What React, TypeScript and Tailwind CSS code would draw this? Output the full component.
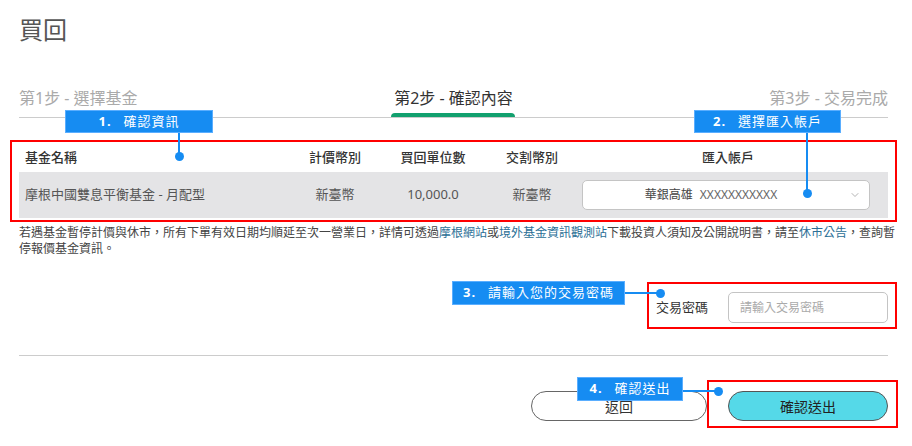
import { ChevronDown } from "lucide-react";

const FONT = {
  fontFamily: '"Noto Sans", "Noto Sans CJK TC", "Liberation Sans", sans-serif',
};

function Step({ label, active, align }: { label: string; active?: boolean; align: string }) {
  return (
    <div className={`flex flex-col ${align}`}>
      <span className={`text-[16px] leading-[20px] ${active ? "text-[#333]" : "text-[#aaa]"}`}>
        {label}
      </span>
      {active && <span className="mt-[5px] h-[4px] w-[124px] rounded-t-[4px] bg-[#12a06e]" />}
    </div>
  );
}

// blue callout tag with a leader line + dot
function Tag({ num, text, className }: { num: string; text: string; className: string }) {
  return (
    <div
      className={`absolute flex h-[23px] items-center justify-center border border-[#5aaeff] bg-[#168cf2] text-[13px] tracking-[1px] text-white ${className}`}
    >
      <span className="mr-[12px] font-bold">{num}.</span>
      <span>{text}</span>
    </div>
  );
}

function Dot({ className }: { className: string }) {
  return <div className={`absolute h-[9px] w-[9px] rounded-full bg-[#168cf2] ${className}`} />;
}

function Line({ className }: { className: string }) {
  return <div className={`absolute bg-[#168cf2] ${className}`} />;
}

export default function App() {
  return (
    <div className="relative h-[446px] w-[912px] overflow-hidden bg-white" style={FONT}>
      <div className="pl-[19px] pr-[24px] pt-[16px]">
        <h1 className="text-[24px] leading-[28px] text-[#555]">買回</h1>

        {/* steps */}
        <div className="mt-[44px] grid grid-cols-3 items-start border-b border-[#ccc]">
          <Step label="第1步 - 選擇基金" align="items-start" />
          <Step label="第2步 - 確認內容" active align="items-center" />
          <Step label="第3步 - 交易完成" align="items-end" />
        </div>

        {/* fund table */}
        <div className="mt-[25px] text-[13px]">
          <div className="grid h-[29px] grid-cols-[281px_70px_126px_72px_1fr] items-center font-medium text-[#333]">
            <span className="pl-[6px]">基金名稱</span>
            <span className="text-center">計價幣別</span>
            <span className="text-center">買回單位數</span>
            <span className="text-center">交割幣別</span>
            <span className="text-center">匯入帳戶</span>
          </div>
          <div className="grid h-[46px] grid-cols-[281px_70px_126px_72px_1fr] items-center bg-[#e4e4e6] text-[#555]">
            <span className="pl-[6px]">摩根中國雙息平衡基金 - 月配型</span>
            <span className="text-center">新臺幣</span>
            <span className="text-center">10,000.0</span>
            <span className="text-center">新臺幣</span>
            <div className="pl-[14px] pr-[18px]">
              <div className="relative flex h-[30px] items-center justify-center rounded-[5px] border border-[#c4c4c4] bg-white pr-[30px] text-[12px] text-[#444]">
                <span>華銀高雄</span>
                <span className="ml-[7px] text-[#666]">XXXXXXXXXXX</span>
                <ChevronDown size={12} strokeWidth={1.5} className="absolute right-[8px] text-[#999]" />
              </div>
            </div>
          </div>
        </div>

        <p className="mt-[7px] w-[880px] text-[12px] leading-[16px] text-[#444]">
          若遇基金暫停計價與休市，所有下單有效日期均順延至次一營業日，詳情可透過<span className="text-[#2b6f96]">摩根網站</span>或<span className="text-[#2b6f96]">境外基金資訊觀測站</span>下載投資人須知及公開說明書，請至<span className="text-[#2b6f96]">休市公告</span>，查詢暫停報價基金資訊。
        </p>

        {/* password */}
        <div className="mt-[35px] flex items-center justify-end gap-[20px]">
          <span className="text-[13px] text-[#333]">交易密碼</span>
          <input
            type="password"
            placeholder="請輸入交易密碼"
            className="h-[31px] w-[160px] rounded-[5px] border border-[#c4c4c4] px-[11px] text-[12px] outline-none placeholder:text-[#aaa]"
          />
        </div>

        <div className="mt-[32px] border-t border-[#ccc]" />

        {/* actions */}
        <div className="mt-[35px] flex justify-end gap-[21px]">
          <button className="h-[30px] w-[176px] rounded-full border border-[#666] bg-white text-[14px] text-[#333]">
            返回
          </button>
          <button className="h-[30px] w-[160px] rounded-full border border-[#555] bg-[#55d9e8] text-[14px] text-[#222]">
            確認送出
          </button>
        </div>
      </div>

      {/* annotation overlay */}
      <div className="pointer-events-none absolute left-[10px] top-[140px] h-[82px] w-[887px] border-2 border-[#ff0000]" />
      <div className="pointer-events-none absolute left-[647px] top-[282px] h-[47px] w-[250px] border-2 border-[#ff0000]" />
      <div className="pointer-events-none absolute left-[707px] top-[380px] h-[48px] w-[191px] border-2 border-[#ff0000]" />

      <Line className="left-[178px] top-[133px] h-[22px] w-[2px]" />
      <Dot className="left-[175px] top-[152px]" />
      <Tag num="1" text="確認資訊" className="left-[65px] top-[110px] w-[148px]" />

      <Line className="left-[806px] top-[133px] h-[58px] w-[2px]" />
      <Dot className="left-[803px] top-[189px]" />
      <Tag num="2" text="選擇匯入帳戶" className="left-[694px] top-[110px] w-[147px]" />

      <Line className="left-[624px] top-[292px] h-[2px] w-[34px]" />
      <Dot className="left-[656px] top-[289px]" />
      <Tag num="3" text="請輸入您的交易密碼" className="left-[452px] top-[281px] w-[173px] h-[24px]" />

      <Line className="left-[683px] top-[390px] h-[2px] w-[32px]" />
      <Dot className="left-[714px] top-[387px]" />
      <Tag num="4" text="確認送出" className="left-[577px] top-[377px] w-[106px] h-[24px]" />
    </div>
  );
}
